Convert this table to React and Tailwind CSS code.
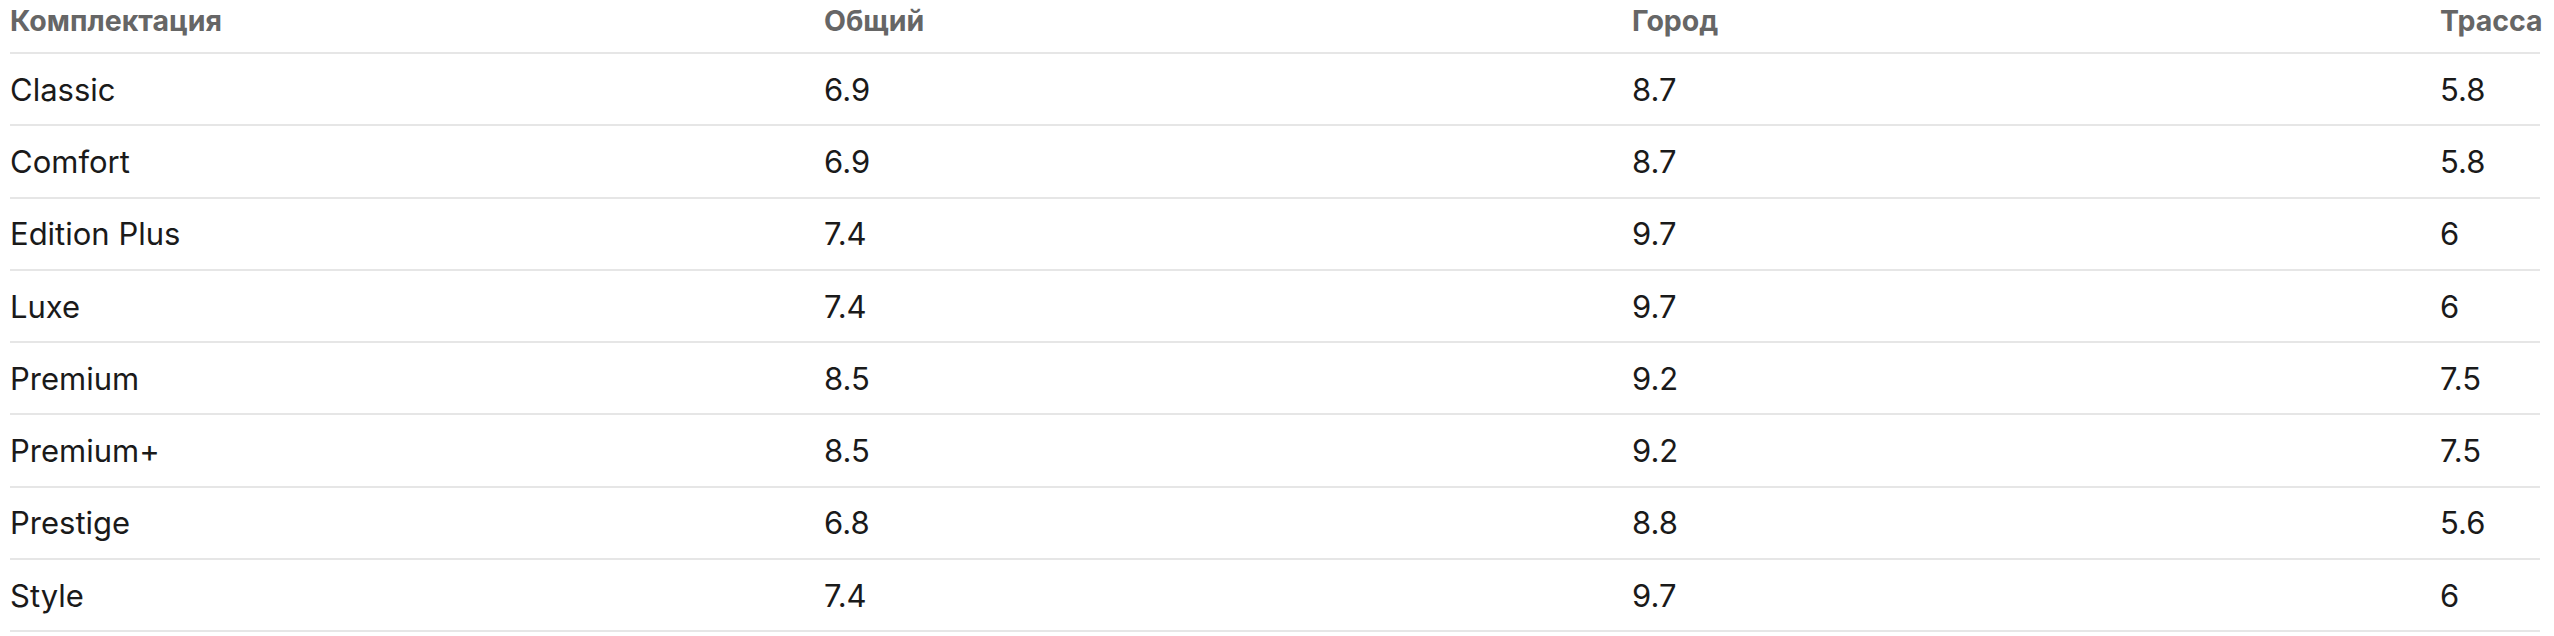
import React from "react";

const rows = [
  ["Classic", "6.9", "8.7", "5.8"],
  ["Comfort", "6.9", "8.7", "5.8"],
  ["Edition Plus", "7.4", "9.7", "6"],
  ["Luxe", "7.4", "9.7", "6"],
  ["Premium", "8.5", "9.2", "7.5"],
  ["Premium+", "8.5", "9.2", "7.5"],
  ["Prestige", "6.8", "8.8", "5.6"],
  ["Style", "7.4", "9.7", "6"],
];

const cols = "grid grid-cols-[814px_808px_808px_100px]";

export default function App() {
  return (
    <div className="w-[2554px] h-[636px] bg-white overflow-hidden" style={{ fontFamily: "Inter, 'Liberation Sans', sans-serif" }}>
      <div className="ml-[10px] w-[2530px]">
        <div className={`${cols} h-[54px] border-b-2 border-[#e6e6e6] items-center pb-[10px] text-[28.5px] leading-none font-bold text-[#666666] whitespace-nowrap`}>
          <div>Комплектация</div>
          <div>Общий</div>
          <div>Город</div>
          <div>Трасса</div>
        </div>
        {rows.map((r) => (
          <div key={r[0]} className={`${cols} h-[72.3px] border-b-2 border-[#e6e6e6] items-center text-[31px] leading-none text-[#1a1a1a]`}>
            {r.map((c, i) => (
              <div key={i}>{c}</div>
            ))}
          </div>
        ))}
      </div>
    </div>
  );
}
